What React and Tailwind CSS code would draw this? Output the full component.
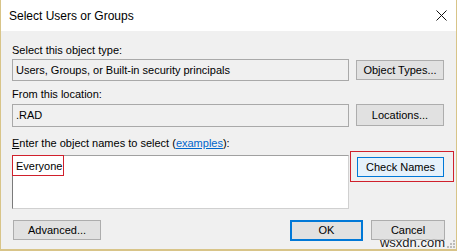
import React from "react";

const font = { fontFamily: '"Liberation Sans", Arial, sans-serif' };

const Button = ({ children, className = "" }) => (
  <div
    className={`flex items-center justify-center border border-[#adadad] bg-[#e1e1e1] text-[11px] text-black ${className}`}
  >
    {children}
  </div>
);

export default function App() {
  return (
    <div
      className="relative w-[457px] h-[251px] overflow-hidden border-l border-r border-b-[2px] border-[#d8c488] bg-[#f0f0f0]"
      style={font}
    >
      {/* title bar */}
      <div className="flex h-[31px] items-center justify-between bg-white pl-[8px] pr-[9px]">
        <span className="text-[12px] text-black">Select Users or Groups</span>
        <svg width="11" height="11" viewBox="0 0 11 11" className="mb-[1px]">
          <path d="M0.5 0.5 L10.5 10.5 M10.5 0.5 L0.5 10.5" stroke="#111" strokeWidth="1" />
        </svg>
      </div>

      <div className="pl-[11px]">
        {/* object type */}
        <div className="mt-[12px] h-[14px] text-[11px] leading-[14px] text-black">
          Select this object type:
        </div>
        <div className="mt-[2px] flex items-start">
          <div className="flex h-[22px] w-[337px] items-center border border-[#a9a9a9] pl-[3px] text-[11px] text-black">
            Users, Groups, or Built-in security principals
          </div>
          <Button className="ml-[7px] mt-[1px] h-[20px] w-[88px]">Object Types...</Button>
        </div>

        {/* location */}
        <div className="mt-[6px] h-[14px] text-[11px] leading-[14px] text-black">
          From this location:
        </div>
        <div className="mt-[3px] flex items-start">
          <div className="flex h-[23px] w-[337px] items-center border border-[#a9a9a9] pl-[3px] text-[11px] text-black">
            .RAD
          </div>
          <Button className="ml-[7px] h-[22px] w-[88px]">Locations...</Button>
        </div>

        {/* names */}
        <div className="mt-[9px] h-[14px] text-[11px] leading-[14px] text-black">
          <span className="underline">E</span>nter the object names to select (
          <span className="text-[#0066cc] underline">examples</span>):
        </div>
        <div className="mt-[1px] flex items-start">
          <div className="relative mt-[4px] h-[54px] w-[337px] border border-[#d0d0d0] border-l-[#7a7a7a] border-t-[#a0a0a0] bg-white">
            <span className="absolute left-[3px] top-[3px] text-[11px] leading-[14px] text-black">
              Everyone
            </span>
            <div className="absolute -left-[1px] -top-[1px] h-[21px] w-[52px] border border-[#d0202c]" />
          </div>
          <div className="ml-[1px] h-[31px] w-[104px] border border-[#d0202c] pl-[6px] pt-[5px]">
            <div className="flex h-[20px] w-[87px] items-center justify-center border border-[#0078d7] bg-[#e5f1fb] text-[11px] text-black">
              Check Names
            </div>
          </div>
        </div>

        {/* bottom buttons */}
        <div className="mt-[11px] flex items-start">
          <Button className="ml-[1px] h-[20px] w-[88px]">Advanced...</Button>
          <div className="ml-[189px] flex h-[21px] w-[73px] items-center justify-center border-2 border-[#0078d7] bg-[#e1e1e1] text-[11px] text-black">
            OK
          </div>
          <Button className="ml-[8px] h-[20px] w-[74px]">Cancel</Button>
        </div>
      </div>

      {/* watermark */}
      <div
        className="absolute right-[11px] top-[236px] text-[13px] leading-[14px] text-[#222]"
        style={{ textShadow: "0 0 2px #fff, 0 0 2px #fff" }}
      >
        wsxdn.com
      </div>
      <svg width="8" height="8" viewBox="0 0 8 8" className="absolute right-[1px] bottom-[1px]">
        <rect x="6" y="0" width="2" height="2" fill="#bbb" />
        <rect x="3" y="3" width="2" height="2" fill="#bbb" />
        <rect x="6" y="3" width="2" height="2" fill="#bbb" />
        <rect x="0" y="6" width="2" height="2" fill="#bbb" />
        <rect x="3" y="6" width="2" height="2" fill="#bbb" />
        <rect x="6" y="6" width="2" height="2" fill="#bbb" />
      </svg>
    </div>
  );
}
